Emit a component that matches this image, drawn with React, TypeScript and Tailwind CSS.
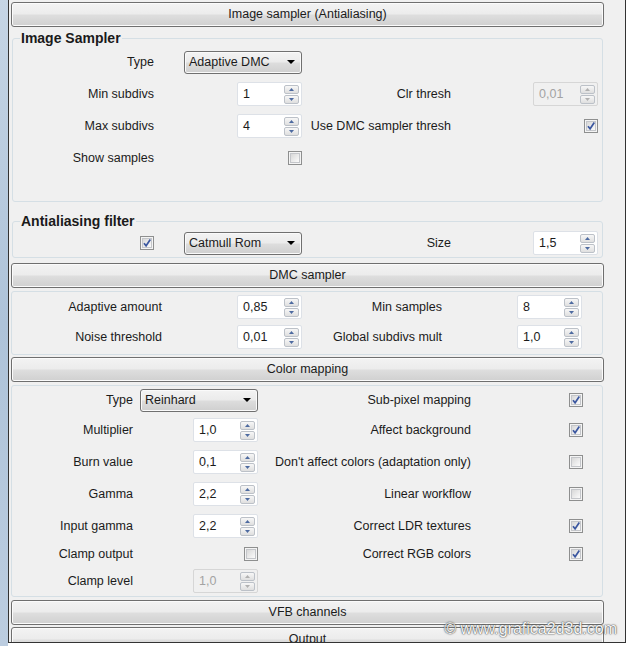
import type { ReactNode } from 'react';

// Qt/Vista-style render settings panel (V-Ray image sampler rollouts).

function Header({ children, className = '' }: { children: ReactNode; className?: string }) {
  return (
    <div
      className={`ml-px flex h-[25px] w-[593px] shrink-0 items-center justify-center rounded-[3px] border border-[#6f6f6f] bg-[linear-gradient(#f3f3f3_0%,#ececec_48%,#dedede_52%,#d0d0d0_100%)] shadow-[inset_0_0_0_1px_#fbfbfb] ${className}`}
    >
      {children}
    </div>
  );
}

function Label({ children }: { children: ReactNode }) {
  return <span className="justify-self-end whitespace-nowrap">{children}</span>;
}

function SpinArrows({ disabled }: { disabled?: boolean }) {
  const fill = disabled ? '#b0b0b0' : '#4d6aa0';
  return (
    <div className="flex w-[15px] flex-col gap-px">
      {[0, 1].map((i) => (
        <div
          key={i}
          className="flex h-[9px] items-center justify-center rounded-[2px] border border-[#bcc1c8] bg-[linear-gradient(#f7f7f7,#dfdfdf)]"
        >
          <svg width="5" height="3" viewBox="0 0 5 3">
            <path d={i === 0 ? 'M0 3L2.5 0L5 3Z' : 'M0 0L2.5 3L5 0Z'} fill={fill} />
          </svg>
        </div>
      ))}
    </div>
  );
}

function Spin({ value, disabled }: { value: string; disabled?: boolean }) {
  return (
    <div
      className={`flex h-[24px] w-[65px] items-center justify-between rounded-[2px] border pl-[5px] pr-[2px] justify-self-end ${
        disabled ? 'border-[#d6d6d6] bg-[#f0f0f0] text-[#a3a3a3]' : 'border-[#dde1e7] bg-white'
      }`}
    >
      <span>{value}</span>
      <SpinArrows disabled={disabled} />
    </div>
  );
}

function Check({ checked }: { checked?: boolean }) {
  return (
    <div className="flex h-[14px] w-[14px] items-center justify-center justify-self-end border border-[#8e8f8f] bg-[#f4f4f4]">
      <div className="relative h-[10px] w-[10px] border border-[#c4c6ca] bg-[linear-gradient(135deg,#d8d8d8,#fbfbfb)]">
        {checked && (
          <svg className="absolute -left-px -top-px" width="10" height="10" viewBox="0 0 10 10">
            <path d="M2 5.2L4.1 7.8L8.3 1.6" fill="none" stroke="#3b57a0" strokeWidth="1.7" />
          </svg>
        )}
      </div>
    </div>
  );
}

function Combo({ value, className }: { value: string; className: string }) {
  return (
    <div
      className={`flex h-[23px] items-center justify-between justify-self-end rounded-[3px] border border-[#707070] bg-[linear-gradient(#f3f3f3_0%,#ebebeb_48%,#dddddd_52%,#cfcfcf_100%)] pl-[4px] pr-[6px] shadow-[inset_0_0_0_1px_#fafafa] ${className}`}
    >
      <span>{value}</span>
      <svg width="8" height="4" viewBox="0 0 8 4">
        <path d="M0 0H8L4 4Z" fill="#000" />
      </svg>
    </div>
  );
}

function Group({
  title,
  className,
  children,
}: {
  title: string;
  className: string;
  children: ReactNode;
}) {
  return (
    <fieldset
      className={`ml-[2px] w-[591px] rounded-[3px] border border-[#d5dfe5] ${className}`}
    >
      <legend className="ml-[7px] px-px text-[14px] font-bold leading-4 text-[#1a1a1a]">
        {title}
      </legend>
      {children}
    </fieldset>
  );
}

export default function App() {
  return (
    <div className="flex h-[646px] w-[631px] overflow-hidden bg-white font-['Liberation_Sans',Arial,sans-serif] text-[12.5px] text-[#1b1b1b]">
      <div className="w-[8px] shrink-0 bg-[linear-gradient(#c6d5e5,#aec3d9_50%,#bccde0)]" />
      <div className="relative h-[643px] w-[618px] shrink-0 overflow-hidden border-x border-b border-[#333] bg-[#f0f0f0]">
        <div className="flex flex-col pl-px">
          <Header className="mt-[2px]">Image sampler (Antialiasing)</Header>

          <Group title="Image Sampler" className="mt-[3px] pb-[27px]">
            <div className="grid grid-cols-[141px_148px_149px_147px] grid-rows-[32px_32px_32px_32px] items-center">
              <Label>Type</Label>
              <Combo value="Adaptive DMC" className="w-[118px]" />
              <div />
              <div />

              <Label>Min subdivs</Label>
              <Spin value="1" />
              <Label>Clr thresh</Label>
              <Spin value="0,01" disabled />

              <Label>Max subdivs</Label>
              <Spin value="4" />
              <Label>Use DMC sampler thresh</Label>
              <Check checked />

              <Label>Show samples</Label>
              <Check />
              <div />
              <div />
            </div>
          </Group>

          <Group title="Antialiasing filter" className="mt-[11px]">
            <div className="grid h-[28px] grid-cols-[141px_148px_149px_147px] items-center">
              <Check checked />
              <Combo value="Catmull Rom" className="w-[118px]" />
              <Label>Size</Label>
              <Spin value="1,5" />
            </div>
          </Group>

          <Header className="mt-[5px]">DMC sampler</Header>
          <div className="ml-px mt-[3px] w-[592px] rounded-[3px] border border-[#d5dfe5] pb-[2px]">
            <div className="grid grid-cols-[150px_140px_140px_140px] grid-rows-[30px_30px] items-center">
              <Label>Adaptive amount</Label>
              <Spin value="0,85" />
              <Label>Min samples</Label>
              <Spin value="8" />

              <Label>Noise threshold</Label>
              <Spin value="0,01" />
              <Label>Global subdivs mult</Label>
              <Spin value="1,0" />
            </div>
          </div>

          <Header className="mt-[2px]">Color mapping</Header>
          <div className="ml-px mt-[3px] w-[592px] rounded-[3px] border border-[#d5dfe5]">
            <div className="grid grid-cols-[121px_125px_213px_112px] grid-rows-[28px_32px_32px_32px_32px_24px_30px] items-center">
              <Label>Type</Label>
              <Combo value="Reinhard" className="w-[118px]" />
              <Label>Sub-pixel mapping</Label>
              <Check checked />

              <Label>Multiplier</Label>
              <Spin value="1,0" />
              <Label>Affect background</Label>
              <Check checked />

              <Label>Burn value</Label>
              <Spin value="0,1" />
              <Label>Don't affect colors (adaptation only)</Label>
              <Check />

              <Label>Gamma</Label>
              <Spin value="2,2" />
              <Label>Linear workflow</Label>
              <Check />

              <Label>Input gamma</Label>
              <Spin value="2,2" />
              <Label>Correct LDR textures</Label>
              <Check checked />

              <Label>Clamp output</Label>
              <Check />
              <Label>Correct RGB colors</Label>
              <Check checked />

              <Label>Clamp level</Label>
              <Spin value="1,0" disabled />
              <div />
              <div />
            </div>
          </div>

          <Header className="mt-[3px]">VFB channels</Header>
          <Header className="mt-[2px]">Output</Header>
        </div>

        {/* watermark */}
        <div className="absolute right-[8px] top-[620px] text-[16px] leading-[18px] text-[#f6f6f6] [text-shadow:0_0_1px_#3a3a3a,0_0_2px_#555]">
          © www.grafica2d3d.com
        </div>
      </div>
    </div>
  );
}
